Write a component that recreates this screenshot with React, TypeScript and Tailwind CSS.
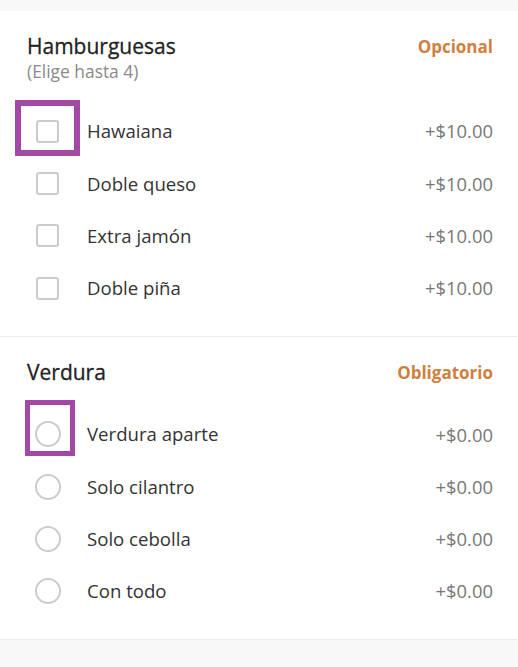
import { useState } from 'react';

interface Option {
  name: string;
  price: string;
}

const burgers: Option[] = [
  { name: 'Hawaiana', price: '+$10.00' },
  { name: 'Doble queso', price: '+$10.00' },
  { name: 'Extra jamón', price: '+$10.00' },
  { name: 'Doble piña', price: '+$10.00' },
];

const veggies: Option[] = [
  { name: 'Verdura aparte', price: '+$0.00' },
  { name: 'Solo cilantro', price: '+$0.00' },
  { name: 'Solo cebolla', price: '+$0.00' },
  { name: 'Con todo', price: '+$0.00' },
];

export default function App() {
  const [checked, setChecked] = useState<string[]>([]);
  const [veg, setVeg] = useState<string | null>(null);

  const toggle = (name: string) => {
    setChecked(prev => prev.includes(name) ? prev.filter(n => n !== name) : prev.length < 4 ? [...prev, name] : prev);
  };

  return (
    <div className="min-h-[667px] bg-[#f8f8f8] pt-[11px] text-[#333]" style={{ fontFamily: '"Open Sans", sans-serif' }}>
      <section className="bg-white px-[25px] pt-[22px] pb-[22px] border-b border-[#eeeeee]">
        <div className="flex items-start justify-between">
          <div>
            <h2 className="text-[21px] leading-[27px] text-[#222] pl-[2px] [-webkit-text-stroke:0.3px_#222]">Hamburguesas</h2>
            <p className="text-[17.4px] leading-[22px] text-[#8a8a8a] pl-[2px]">(Elige hasta 4)</p>
          </div>
          <span className="text-[17px] leading-[27px] font-bold text-[#d07f3e]">Opcional</span>
        </div>

        <div className="mt-[23px]">
          {burgers.map((o, i) => (
            <div key={o.name} onClick={() => toggle(o.name)} className="relative flex items-center h-[52.3px] cursor-pointer">
              {i === 0 && (
                <div className="absolute left-[-10px] top-[-5px] w-[65px] h-[56px] border-[6px] border-[#a348a5]" />
              )}
              <div className="w-[44px] flex justify-center pl-[1px]">
                <span className={`block w-[23px] h-[23px] rounded-[3px] border-2 ${checked.includes(o.name) ? 'border-[#d07f3e] bg-[#d07f3e]' : 'border-[#cccccc]'}`} />
              </div>
              <span className="ml-[18px] flex-1 text-[18.6px] text-[#333]">{o.name}</span>
              <span className="text-[18.4px] text-[#777]">{o.price}</span>
            </div>
          ))}
        </div>
      </section>

      <section className="bg-white px-[25px] pt-[22px] pb-[22px] border-b border-[#eeeeee]">
        <div className="flex items-center justify-between">
          <h2 className="text-[21px] leading-[27px] text-[#222] pl-[2px] [-webkit-text-stroke:0.3px_#222]">Verdura</h2>
          <span className="text-[17px] leading-[27px] font-bold text-[#d07f3e]">Obligatorio</span>
        </div>

        <div className="mt-[22px]">
          {veggies.map((o, i) => (
            <div key={o.name} onClick={() => setVeg(o.name)} className="relative flex items-center h-[52.3px] cursor-pointer">
              {i === 0 && (
                <div className="absolute left-0 top-[-8px] w-[50px] h-[56px] border-[5px] border-[#a348a5]" />
              )}
              <div className="w-[44px] flex justify-center pl-[1px]">
                <span className={`block w-[26px] h-[26px] rounded-full border-2 ${veg === o.name ? 'border-[#d07f3e] border-[7px]' : 'border-[#cccccc]'}`} />
              </div>
              <span className="ml-[18px] flex-1 text-[18.6px] text-[#333]">{o.name}</span>
              <span className="text-[18.4px] text-[#777]">{o.price}</span>
            </div>
          ))}
        </div>
      </section>
    </div>
  );
}
